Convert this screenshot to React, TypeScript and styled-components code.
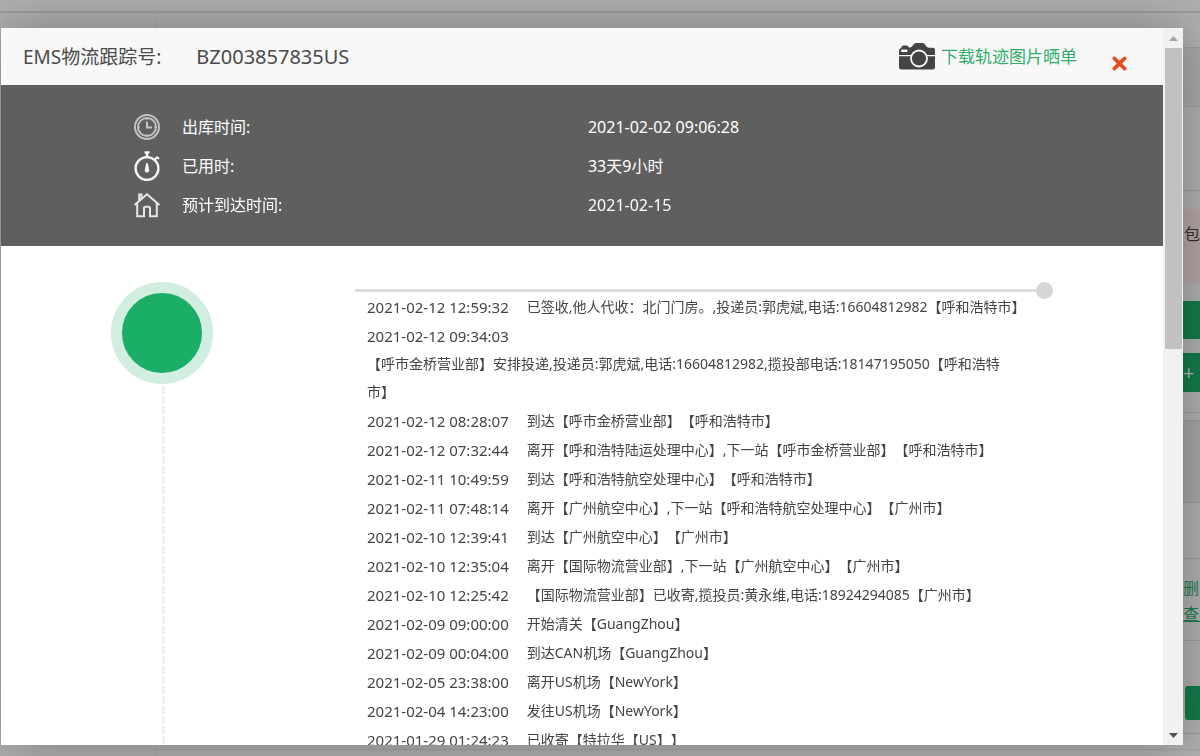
import React from "react";
import styled, { createGlobalStyle } from "styled-components";

const GlobalStyle = createGlobalStyle`
  * { box-sizing: border-box; }
  body {
    margin: 0;
    background: #b0b0b0;
    color: #444;
    font-family: "Noto Sans", "Noto Sans CJK SC", sans-serif;
    font-size: 14px;
    text-spacing-trim: space-all;
    overflow: hidden;
  }
  button { border: 0; padding: 0; background: none; font: inherit; cursor: pointer; }
  svg { display: block; }
`;

/* ---------- dimmed page behind the dialog ---------- */

const Page = styled.div`
  display: flex;
  flex-direction: column;
  height: 100vh;
  background: #b0b0b0;
`;

const TopBar = styled.div`
  flex: none;
  height: 13px;
  border-bottom: 2px solid #9f9f9f;
`;

const PageBody = styled.div`
  display: flex;
  flex: 1;
  min-height: 0;
`;

const PageSide = styled.div`
  width: 156px;
  border-right: 1px solid #a4a4a4;
`;

const PageMain = styled.div`
  flex: 1;
  margin-bottom: 6px;
  border-bottom: 1px solid #a2a2a2;
`;

const Actions = styled.div`
  width: 17px;
  margin-bottom: 6px;
  overflow: hidden;
  border-bottom: 1px solid #a2a2a2;
  white-space: nowrap;
`;

const Cell = styled.div<{ $height: number; $shade?: string }>`
  height: ${(p) => p.$height}px;
  border-bottom: 1px solid #9c9c9c;
  background: ${(p) => p.$shade ?? "transparent"};
`;

const Space = styled.div<{ $height: number }>`
  height: ${(p) => p.$height}px;
`;

const Notice = styled.div`
  height: 74px;
  padding: 14px 0 0 1px;
  background: #b5a5a5;
  color: #333;
  font-size: 16px;
  line-height: 22px;
`;

const PageButton = styled.button<{ $height: number; $rounded?: boolean }>`
  display: block;
  width: 60px;
  height: ${(p) => p.$height}px;
  margin-left: ${(p) => (p.$rounded ? 2 : 0)}px;
  border-radius: ${(p) => (p.$rounded ? 3 : 0)}px;
  background: #127b49;
  color: #a9b8ae;
  font-size: 20px;
  line-height: 24px;
  text-align: left;
`;

const PageLink = styled.a`
  display: block;
  color: #1c7d50;
  font-size: 16px;
  line-height: 26px;
  text-decoration: none;
  &:last-of-type { text-decoration: underline; }
`;

/* ---------- dialog ---------- */

const Dialog = styled.section`
  position: fixed;
  inset: 28px 17px 11px 1px;
  display: flex;
  background: #fff;
  box-shadow: 0 0 50px rgba(0, 0, 0, 0.3);
`;

const Content = styled.div`
  display: flex;
  flex: 1;
  flex-direction: column;
  min-width: 0;
  overflow: hidden;
`;

const Header = styled.header`
  display: flex;
  flex: none;
  align-items: center;
  height: 57px;
  padding: 0 36px 0 22px;
  background: #f8f8f8;
`;

const Title = styled.h1`
  display: flex;
  flex: 1;
  align-items: baseline;
  gap: 35px;
  margin: 0;
  color: #4a4a4a;
  font-size: 19px;
  font-weight: 400;
  line-height: 28px;
`;

const TrackingNumber = styled.span`
  font-size: 20px;
`;

const Download = styled.a`
  display: flex;
  align-items: center;
  gap: 6px;
  color: #2fae6c;
  font-size: 17px;
  line-height: 24px;
  text-decoration: none;
`;

const Close = styled.button`
  margin: 14px 0 0 35px;
`;

const Summary = styled.dl`
  flex: none;
  margin: 0;
  padding: 22px 0 22px 132px;
  background: #5f5f5f;
  color: #fff;
  font-size: 16px;
`;

const SummaryRow = styled.div`
  display: grid;
  grid-template-columns: 49px 12fr 17fr;
  align-items: center;
  height: 39px;

  dt, dd { margin: 0; line-height: 24px; }
`;

const Track = styled.div`
  display: grid;
  flex: 1;
  grid-template-columns: 244px 1fr;
  min-height: 0;
  padding: 36px 110px 0;
`;

const Stage = styled.div`
  display: flex;
  flex-direction: column;
  align-items: center;
  width: 102px;
`;

const StageDot = styled.div`
  flex: none;
  width: 102px;
  height: 102px;
  border: 11px solid #d1eee0;
  border-radius: 50%;
  background: #1aae66;
`;

const StageLine = styled.div`
  flex: 1;
  width: 3px;
  margin: 2px 0 0 3px;
  background: repeating-linear-gradient(#f0f0f0 0 8px, #fff 8px 10px);
`;

const Rule = styled.div`
  display: flex;
  align-items: center;
  height: 6px;
  margin-top: 5px;

  &::before { content: ""; flex: 1; height: 3px; background: #dcdcdc; }
  &::after { content: ""; width: 17px; height: 17px; border-radius: 50%; background: #d6d6d6; }
`;

const Events = styled.ol`
  display: flex;
  flex-direction: column;
  gap: 1px;
  margin: 0;
  padding: 0 12px;
  list-style: none;
  color: #444;
  line-height: 28px;
`;

const Event = styled.li<{ $stacked?: boolean }>`
  display: flex;
  flex-direction: ${(p) => (p.$stacked ? "column" : "row")};
  column-gap: 18px;

  time { flex: none; font-size: 15px; white-space: nowrap; }
  p { margin: 0; max-width: 650px; white-space: ${(p) => (p.$stacked ? "normal" : "nowrap")}; }
`;

const ScrollBar = styled.div`
  display: flex;
  flex: none;
  flex-direction: column;
  width: 20px;
  padding: 0 1px 0 2px;
  background: #f1f1f1;
`;

const ScrollArrow = styled.button`
  display: flex;
  flex: none;
  align-items: center;
  justify-content: center;
  height: 20px;
`;

const ScrollTrack = styled.div`
  flex: 1;
`;

const ScrollThumb = styled.div`
  height: 44.5%;
  background: #c1c1c1;
`;

/* ---------- icons ---------- */

const CameraIcon = () => (
  <svg width="36" height="27" viewBox="0 0 36 27" aria-hidden="true">
    <path
      fill="#444"
      d="M0 12V7.500Q0 5.500 2 5L3 3.200Q3.500 2.500 4.500 2.500H7.500Q8.500 2.500 9 3.200L10 4.800 12.500 4 15 1Q15.800 0 17 0H23.500Q24.800 0 25.500 1L28 4Q28.700 4.800 30 4.800H34Q36 4.800 36 6.800V12Z M0 13.200H36V24Q36 26.500 33.500 26.500H2.500Q0 26.500 0 24Z"
    />
    <rect x="2" y="6.500" width="6.500" height="2.400" rx="1" fill="#f8f8f8" />
    <circle cx="20" cy="15.500" r="8" fill="#444" stroke="#f8f8f8" strokeWidth="1.800" />
  </svg>
);

const CloseIcon = () => (
  <svg width="15" height="15" viewBox="0 0 14 14" aria-hidden="true">
    <path d="M2.200 2.200 11.800 11.800M11.800 2.200 2.200 11.800" stroke="#e8491f" strokeWidth="3.400" strokeLinecap="round" />
  </svg>
);

const ClockIcon = () => (
  <svg width="28" height="28" viewBox="0 0 28 28" fill="none" stroke="#c4c4c4" aria-hidden="true">
    <circle cx="14" cy="14" r="12" strokeWidth="1.900" />
    <circle cx="14" cy="14" r="9" strokeWidth="1.900" />
    <path d="M14 8.500V14.500H19" strokeWidth="2" />
    <path d="M14 5V7M14 21V23M5 14H7M21 14H23" strokeWidth="1.200" />
  </svg>
);

const StopwatchIcon = () => (
  <svg width="28" height="30" viewBox="0 0 28 30" fill="none" stroke="#f5f5f5" aria-hidden="true">
    <circle cx="14" cy="17.500" r="11.400" strokeWidth="2.400" />
    <path d="M11.500 1.400H16.500M14 1V6" strokeWidth="2.400" />
    <path d="M21.500 8.800 24.500 6M23.500 5.800 26 8" strokeWidth="2" />
    <path d="M14 12.500 15.300 18.500A1.500 1.500 0 1 1 12.700 18.500Z" fill="#f5f5f5" strokeWidth="1.600" strokeLinejoin="round" />
  </svg>
);

const HouseIcon = () => (
  <svg width="28" height="26" viewBox="0 0 28 26" fill="none" stroke="#e6e6e6" strokeWidth="2" aria-hidden="true">
    <path d="M1.500 13 14 2.200 26.500 13" />
    <path d="M6.200 8.500V2.500H8.500V6.500" strokeWidth="2" />
    <path d="M4.200 11V24.200H11V16Q11 14.800 12.200 14.800H15.800Q17 14.800 17 16V24.200H23.800V11" />
  </svg>
);

const Arrow = ({ down }: { down?: boolean }) => (
  <svg width="9" height="5" viewBox="0 0 9 5" aria-hidden="true">
    <path d={down ? "M0 0H9L4.500 5Z" : "M0 5H9L4.500 0Z"} fill={down ? "#505050" : "#a3a3a3"} />
  </svg>
);

/* ---------- data ---------- */

const summary = [
  { icon: <ClockIcon />, label: "出库时间:", value: "2021-02-02 09:06:28" },
  { icon: <StopwatchIcon />, label: "已用时:", value: "33天9小时" },
  { icon: <HouseIcon />, label: "预计到达时间:", value: "2021-02-15" },
];

const events: { time: string; text: string; stacked?: boolean }[] = [
  { time: "2021-02-12 12:59:32", text: "已签收,他人代收：北门门房。,投递员:郭虎斌,电话:16604812982【呼和浩特市】" },
  {
    time: "2021-02-12 09:34:03",
    text: "【呼市金桥营业部】安排投递,投递员:郭虎斌,电话:16604812982,揽投部电话:18147195050【呼和浩特市】",
    stacked: true,
  },
  { time: "2021-02-12 08:28:07", text: "到达【呼市金桥营业部】【呼和浩特市】" },
  { time: "2021-02-12 07:32:44", text: "离开【呼和浩特陆运处理中心】,下一站【呼市金桥营业部】【呼和浩特市】" },
  { time: "2021-02-11 10:49:59", text: "到达【呼和浩特航空处理中心】【呼和浩特市】" },
  { time: "2021-02-11 07:48:14", text: "离开【广州航空中心】,下一站【呼和浩特航空处理中心】【广州市】" },
  { time: "2021-02-10 12:39:41", text: "到达【广州航空中心】【广州市】" },
  { time: "2021-02-10 12:35:04", text: "离开【国际物流营业部】,下一站【广州航空中心】【广州市】" },
  { time: "2021-02-10 12:25:42", text: "【国际物流营业部】已收寄,揽投员:黄永维,电话:18924294085【广州市】" },
  { time: "2021-02-09 09:00:00", text: "开始清关【GuangZhou】" },
  { time: "2021-02-09 00:04:00", text: "到达CAN机场【GuangZhou】" },
  { time: "2021-02-05 23:38:00", text: "离开US机场【NewYork】" },
  { time: "2021-02-04 14:23:00", text: "发往US机场【NewYork】" },
  { time: "2021-01-29 01:24:23", text: "已收寄【特拉华【US】】" },
];

export default function App() {
  return (
    <>
      <GlobalStyle />
      <Page>
        <TopBar />
        <PageBody>
          <PageSide />
          <PageMain />
          <Actions>
            <Cell $height={35} />
            <Cell $height={59} $shade="#a9a9a9" />
            <Cell $height={84} />
            <Space $height={18} />
            <Notice>包</Notice>
            <Space $height={18} />
            <PageButton $height={38} aria-label="支付" />
            <Space $height={14} />
            <PageButton $height={39}>+ 去</PageButton>
            <Cell $height={21} />
            <Cell $height={8} />
            <Cell $height={82} $shade="#a6a6a6" />
            <Cell $height={56} />
            <Space $height={16} />
            <PageLink href="#delete">删除</PageLink>
            <PageLink href="#view">查看</PageLink>
            <Cell $height={14} />
            <Space $height={45} />
            <PageButton $height={34} $rounded aria-label="提交" />
            <Cell $height={14} />
          </Actions>
        </PageBody>
      </Page>

      <Dialog role="dialog" aria-labelledby="track-title">
        <Content>
          <Header>
            <Title id="track-title">
              <span>EMS物流跟踪号:</span>
              <TrackingNumber>BZ003857835US</TrackingNumber>
            </Title>
            <Download href="#download">
              <CameraIcon />
              下载轨迹图片晒单
            </Download>
            <Close aria-label="关闭">
              <CloseIcon />
            </Close>
          </Header>

          <Summary>
            {summary.map((item) => (
              <SummaryRow key={item.label}>
                {item.icon}
                <dt>{item.label}</dt>
                <dd>{item.value}</dd>
              </SummaryRow>
            ))}
          </Summary>

          <Track>
            <Stage>
              <StageDot />
              <StageLine />
            </Stage>
            <div>
              <Rule />
              <Events>
                {events.map((event) => (
                  <Event key={event.time} $stacked={event.stacked}>
                    <time>{event.time}</time>
                    <p>{event.text}</p>
                  </Event>
                ))}
              </Events>
            </div>
          </Track>
        </Content>

        <ScrollBar>
          <ScrollArrow aria-label="向上滚动">
            <Arrow />
          </ScrollArrow>
          <ScrollTrack>
            <ScrollThumb />
          </ScrollTrack>
          <ScrollArrow aria-label="向下滚动">
            <Arrow down />
          </ScrollArrow>
        </ScrollBar>
      </Dialog>
    </>
  );
}
